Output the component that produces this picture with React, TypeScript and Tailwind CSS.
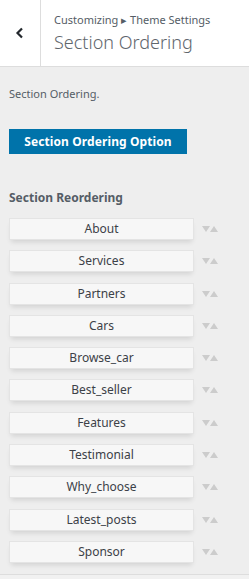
const sections = ['About', 'Services', 'Partners', 'Cars', 'Browse_car', 'Best_seller', 'Features', 'Testimonial', 'Why_choose', 'Latest_posts', 'Sponsor'];

function Arrows() {
    return (
        <svg width="16" height="6" viewBox="0 0 16 6" className="shrink-0">
            <polygon points="0,0 8,0 4,6" fill="#cccccc" />
            <polygon points="8,6 16,6 12,0" fill="#cccccc" />
        </svg>
    );
}

export default function App() {
    return (
        <div className="w-[249px] h-[579px] bg-[#eeeeee] font-['Noto_Sans',sans-serif] overflow-hidden flex flex-col">
            {/* Header */}
            <div className="h-[67px] bg-white border-b border-[#dddddd] flex shrink-0">
                <div className="w-[41px] border-r border-[#dddddd] flex items-center justify-center">
                    <svg width="10" height="12" viewBox="0 0 10 12">
                        <polyline points="7,1.5 2.5,6 7,10.5" fill="none" stroke="#23282d" strokeWidth="2.2" />
                    </svg>
                </div>
                <div className="pl-[13px] pt-[13px]">
                    <div className="text-[11px] leading-[14px] text-[#555d66]">Customizing ▸ Theme Settings</div>
                    <div className="text-[18px] leading-[24px] text-[#5f666d] font-light mt-[3px]">Section Ordering</div>
                </div>
            </div>

            {/* Content */}
            <div className="px-[9px] flex-1">
                <p className="text-[11px] text-[#555d66] mt-[20px] leading-[14px]">Section Ordering.</p>
                <button className="mt-[28px] w-[178px] h-[25px] bg-[#0073aa] text-white text-[12px] font-bold tracking-[0.1px]">
                    Section Ordering Option
                </button>
                <div className="mt-[36px] text-[12px] font-bold text-[#555d66] leading-[16px]">Section Reordering</div>
                <div className="mt-[12px] flex flex-col gap-[10.3px]">
                    {sections.map((s) => (
                        <div key={s} className="flex items-center">
                            <div className="w-[185px] h-[22px] bg-[#f7f7f7] border border-[#e4e4e4] shadow-[0_4px_5px_-2px_rgba(0,0,0,0.12)] flex items-center justify-center text-[12px] text-[#3c4147]">
                                {s}
                            </div>
                            <div className="ml-[8px]">
                                <Arrows />
                            </div>
                        </div>
                    ))}
                </div>
            </div>

            <div className="h-[5px] border-t border-[#dddddd] bg-[#f1f1f1] shrink-0" />
        </div>
    );
}
